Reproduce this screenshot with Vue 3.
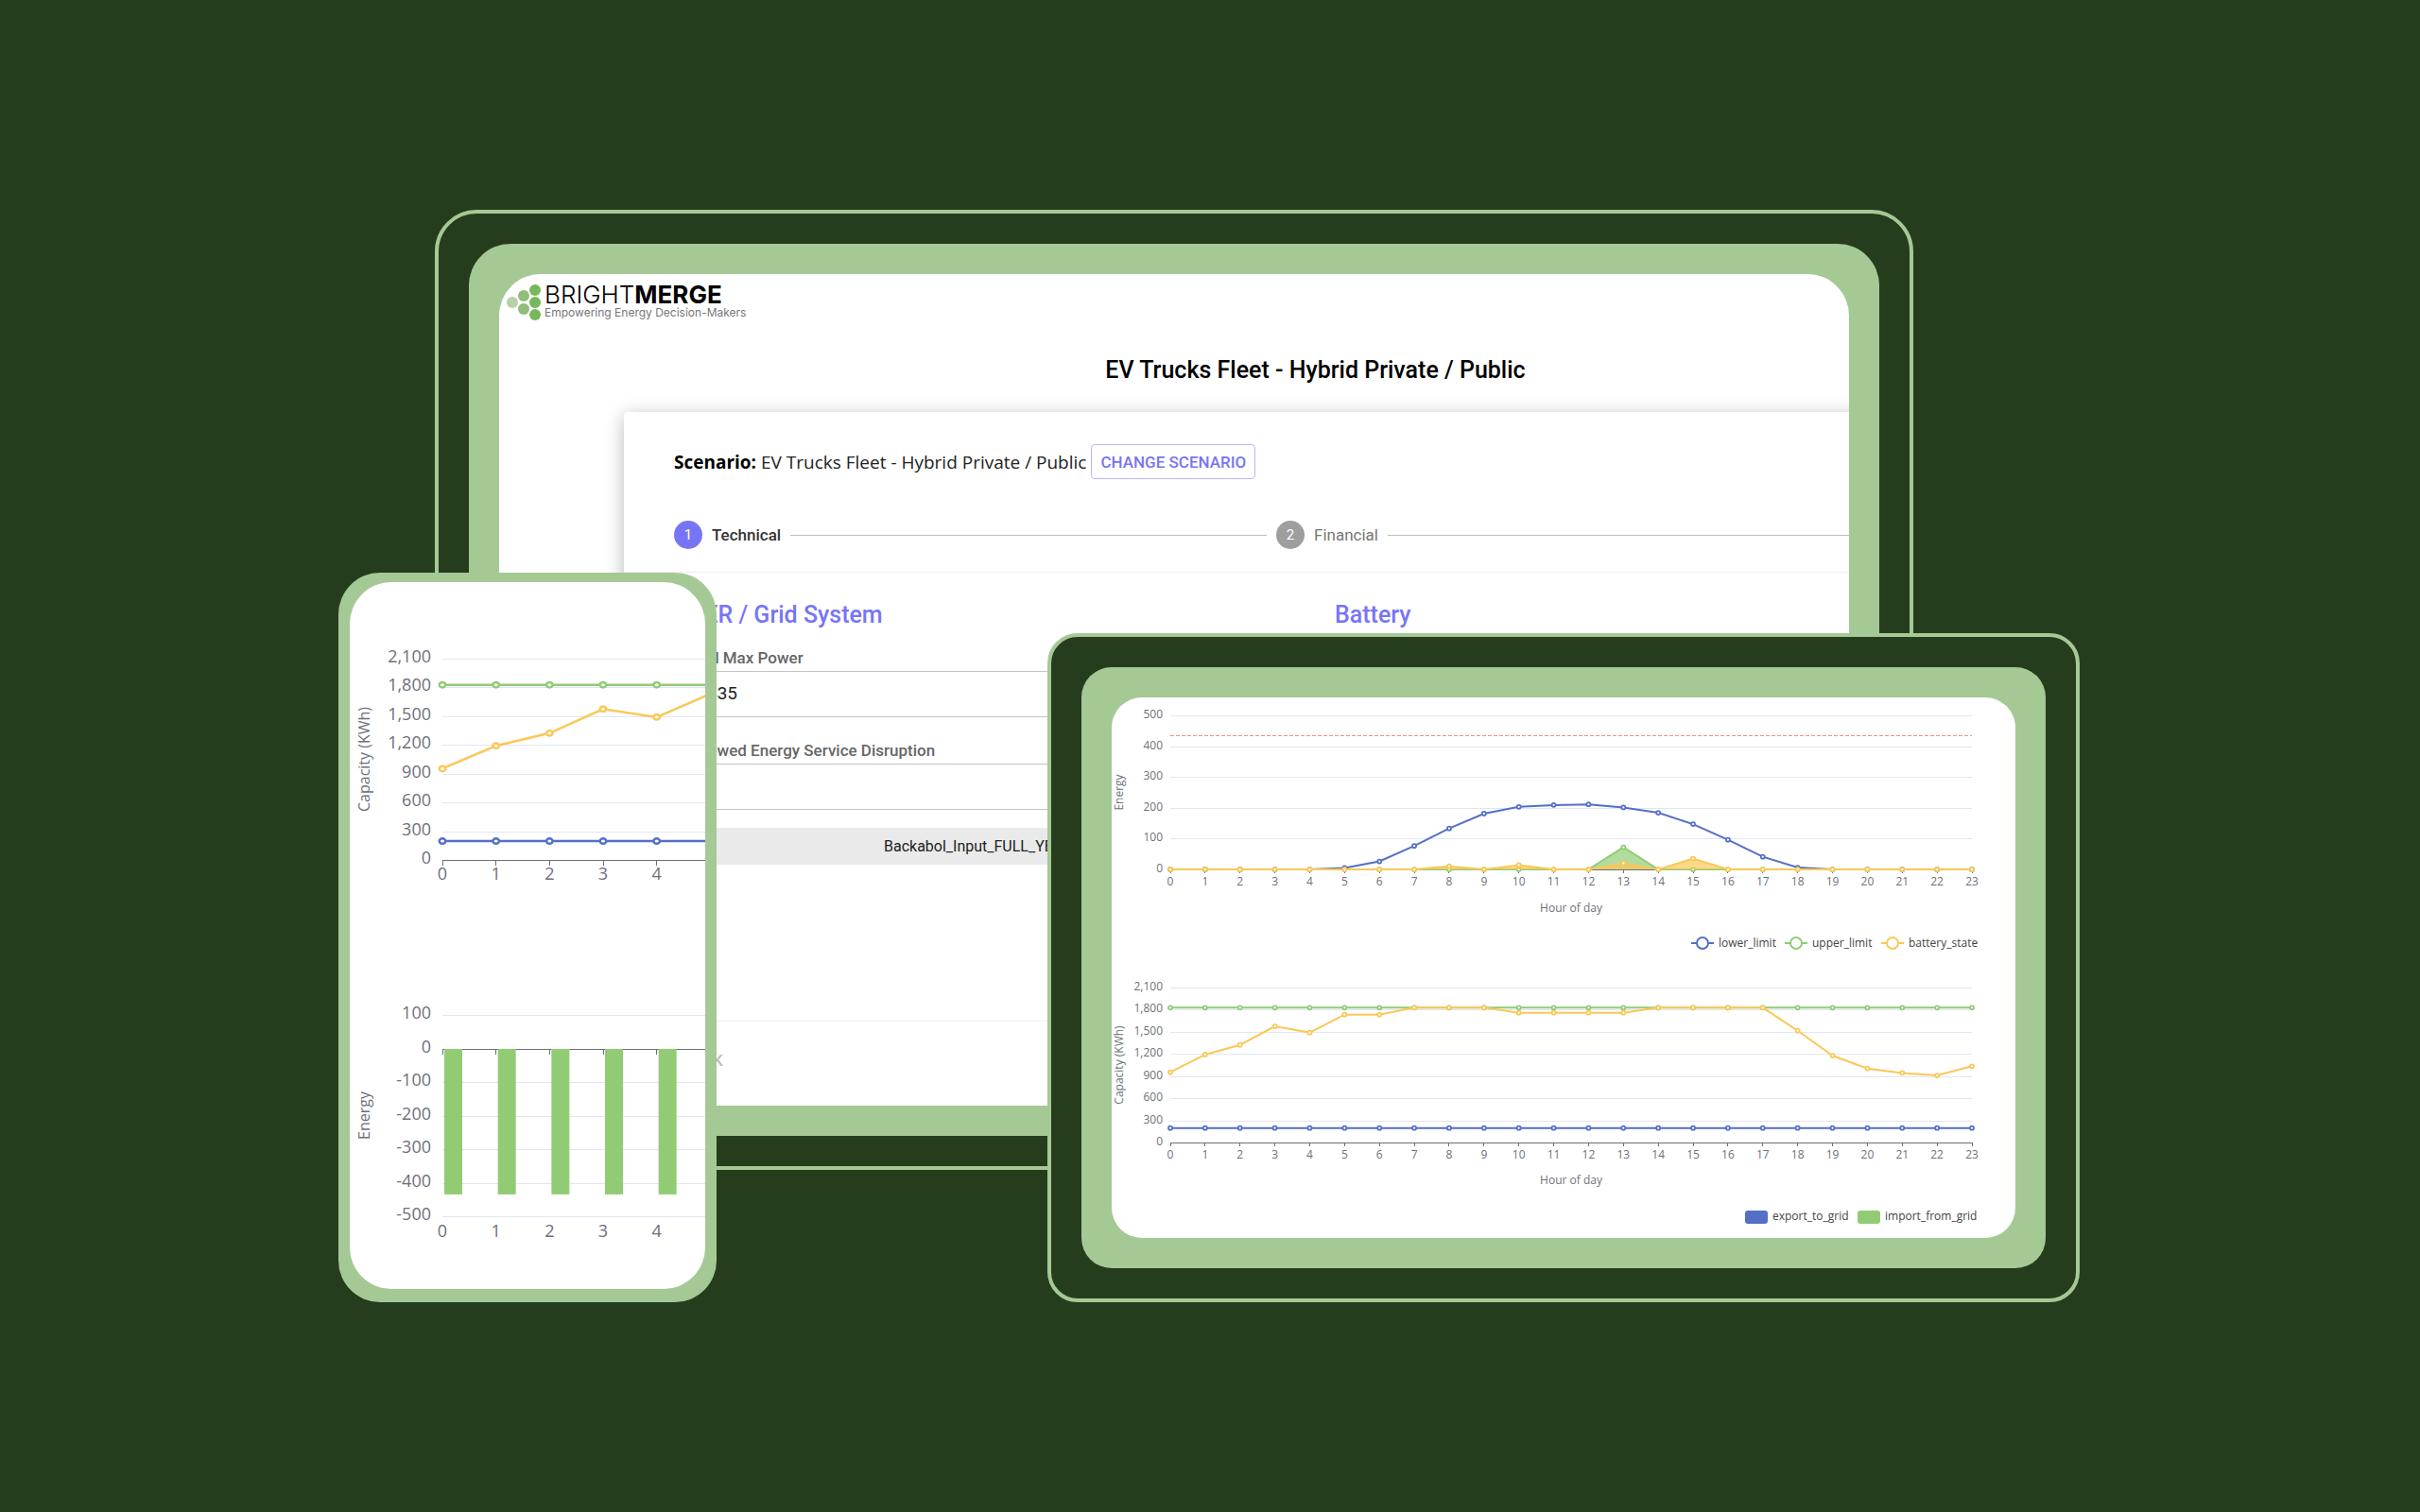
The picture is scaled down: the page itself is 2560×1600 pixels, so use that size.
<script setup>
const fill = (n, v) => Array.from({ length: n }, () => v)
const battery = [
  952, 1191, 1323, 1575, 1490, 1733, 1733, 1827, 1827, 1827, 1758, 1758,
  1758, 1758, 1827, 1827, 1827, 1827, 1515, 1178, 1003, 943, 909, 1033,
]

const BLUE = '#5470c6'
const GREEN = '#91cc75'
const AMBER = '#fac858'

function makeChart(o) {
  const x = (i) => o.left + i * o.step
  const y = (v) => o.bottom - ((v - o.min) / (o.max - o.min)) * (o.bottom - o.top)
  const ticks = []
  for (let v = o.min; v <= o.max; v += o.every) {
    ticks.push({ v, y: Math.round(y(v)), label: v.toLocaleString('en-US') })
  }
  const series = (o.series || []).map((s) => {
    const dots = s.data.map((v, i) => ({ x: x(i), y: y(v) }))
    const points = dots.map((d) => `${d.x.toFixed(1)},${d.y.toFixed(1)}`).join(' ')
    const area = `${x(0)},${y(0)} ${points} ${x(s.data.length - 1)},${y(0)}`
    return { ...s, dots, points, area }
  })
  const hours = Array.from({ length: o.hours }, (_, i) => ({ i, x: x(i) }))
  return { ...o, ticks, series, hours, zero: Math.round(y(0)), y }
}

const wide = { left: 62, right: 910, step: 848 / 23, hours: 24, titleX: 12, labelX: 54 }
const wideCharts = [
  makeChart({
    ...wide, title: 'Energy', top: 19, bottom: 182, min: 0, max: 500, every: 100,
    limit: 40, hourY: 199, axisY: 227,
    series: [
      { color: BLUE, data: [0, 0, 0, 0, 0, 5, 26, 76, 133, 181, 203, 209, 211, 201, 184, 147, 96, 41, 6, 0, 0, 0, 0, 0] },
      { color: GREEN, filled: true, data: [...fill(13, 0), 72, ...fill(10, 0)] },
      { color: AMBER, filled: true, data: [...fill(8, 0), 10, 0, 14, 0, 0, 20, 0, 35, ...fill(8, 0)] },
    ],
  }),
  makeChart({
    ...wide, title: 'Capacity (KWh)', top: 307, bottom: 471, min: 0, max: 2100, every: 300,
    hourY: 488, axisY: 515,
    series: [
      { color: BLUE, data: fill(24, 196) },
      { color: GREEN, data: fill(24, 1827) },
      { color: AMBER, data: battery },
    ],
  }),
]
const lineLegend = [
  { name: 'lower_limit', color: BLUE, x: 625 },
  { name: 'upper_limit', color: GREEN, x: 724 },
  { name: 'battery_state', color: AMBER, x: 826 },
]
const barLegend = [
  { name: 'export_to_grid', color: BLUE, x: 670 },
  { name: 'import_from_grid', color: GREEN, x: 789 },
]

const tall = { left: 98, right: 376, step: 170 / 3, hours: 5, titleX: 21, labelX: 86 }
const tallCharts = [
  makeChart({
    ...tall, title: 'Capacity (KWh)', top: 81, bottom: 294, min: 0, max: 2100, every: 300, hourY: 315,
    series: [
      { color: BLUE, data: fill(6, 196) },
      { color: GREEN, data: fill(6, 1827) },
      { color: AMBER, data: battery.slice(0, 6) },
    ],
  }),
  makeChart({
    ...tall, title: 'Energy', top: 458, bottom: 671, min: -500, max: 100, every: 100, hourY: 693,
    bar: -435,
  }),
]
</script>

<template>
  <main class="stage">
    <section class="device monitor">
      <div class="bezel">
        <div class="screen">
          <div class="page">
            <header class="brand">
              <svg class="mark" width="36" height="40" viewBox="0 0 36 40" aria-hidden="true">
                <circle cx="6" cy="20" r="6" fill="#b4d2a4" />
                <circle cx="18" cy="13" r="6" fill="#90bd7a" />
                <circle cx="18" cy="27" r="6" fill="#90bd7a" />
                <circle cx="30" cy="7" r="6" fill="#76b95a" />
                <circle cx="30" cy="20" r="6" fill="#76b95a" />
                <circle cx="30" cy="33" r="6" fill="#76b95a" />
              </svg>
              <div>
                <div class="name">BRIGHT<b>MERGE</b></div>
                <div class="tagline">Empowering Energy Decision-Makers</div>
              </div>
            </header>
            <h1>EV Trucks Fleet - Hybrid Private / Public</h1>
            <article class="card">
              <div class="scenario">
                <p><b>Scenario:</b> EV Trucks Fleet - Hybrid Private / Public</p>
                <button type="button" class="change">CHANGE SCENARIO</button>
              </div>
              <ol class="steps">
                <li class="step active"><span class="num">1</span><span>Technical</span><i></i></li>
                <li class="step"><span class="num">2</span><span>Financial</span><i></i></li>
              </ol>
              <div class="columns">
                <section class="fields">
                  <h2>DER / Grid System</h2>
                  <label for="max-power">Grid Max Power</label>
                  <input id="max-power" type="text" value="435" />
                  <label for="disruption">Allowed Energy Service Disruption</label>
                  <input id="disruption" type="text" value="" />
                  <div class="file">Backabol_Input_FULL_YEAR</div>
                </section>
                <section>
                  <h2>Battery</h2>
                </section>
              </div>
              <footer class="actions">
                <button type="button" class="back" disabled>BACK</button>
              </footer>
            </article>
          </div>
        </div>
      </div>
    </section>

    <section class="device phone">
      <div class="screen">
        <svg class="charts tall" viewBox="0 0 376 748" preserveAspectRatio="xMinYMin meet">
          <g v-for="c in tallCharts" :key="c.title">
            <text class="title" :transform="`translate(${c.titleX} ${(c.top + c.bottom) / 2}) rotate(-90)`" text-anchor="middle">{{ c.title }}</text>
            <g v-for="t in c.ticks" :key="t.v">
              <line :x1="c.left" :x2="c.right" :y1="t.y" :y2="t.y" class="grid" />
              <text :x="c.labelX" :y="t.y + 4" text-anchor="end">{{ t.label }}</text>
            </g>
            <line :x1="c.left" :x2="c.right" :y1="c.zero" :y2="c.zero" class="axis" />
            <g v-for="h in c.hours" :key="h.i">
              <rect v-if="c.bar" :x="h.x + 2" :y="c.zero" width="19" :height="c.y(c.bar) - c.zero" fill="#91cc75" />
              <line :x1="h.x" :x2="h.x" :y1="c.zero" :y2="c.zero + 6" class="axis" />
              <text :x="h.x" :y="c.hourY" text-anchor="middle">{{ h.i }}</text>
            </g>
            <g v-for="s in c.series" :key="s.color" :stroke="s.color" stroke-width="2.5">
              <polyline :points="s.points" fill="none" />
              <ellipse v-for="d in s.dots" :key="d.x" :cx="d.x" :cy="d.y" rx="3.25" ry="2.75" fill="#fff" />
            </g>
          </g>
        </svg>
      </div>
    </section>

    <section class="device tablet">
      <div class="bezel">
        <div class="screen">
          <svg class="charts wide" viewBox="0 0 956 572" preserveAspectRatio="xMinYMin meet">
            <g v-for="c in wideCharts" :key="c.title">
              <text :transform="`translate(${c.titleX} ${(c.top + c.bottom) / 2}) rotate(-90)`" text-anchor="middle">{{ c.title }}</text>
              <g v-for="t in c.ticks" :key="t.v">
                <line :x1="c.left" :x2="c.right" :y1="t.y" :y2="t.y" class="grid" />
                <text :x="c.labelX" :y="t.y + 3" text-anchor="end">{{ t.label }}</text>
              </g>
              <line :x1="c.left" :x2="c.right" :y1="c.zero" :y2="c.zero" class="axis" />
              <line v-if="c.limit" :x1="c.left" :x2="c.right" :y1="c.limit" :y2="c.limit" class="limit" />
              <g v-for="h in c.hours" :key="h.i">
                <line :x1="h.x" :x2="h.x" :y1="c.zero" :y2="c.zero + 4" class="axis" />
                <text :x="h.x" :y="c.hourY" text-anchor="middle">{{ h.i }}</text>
              </g>
              <g v-for="s in c.series" :key="s.color" :stroke="s.color">
                <polygon v-if="s.filled" :points="s.area" :fill="s.color" fill-opacity="0.7" stroke="none" />
                <polyline :points="s.points" fill="none" stroke-width="2" />
                <circle v-for="d in s.dots" :key="d.x" :cx="d.x" :cy="d.y" r="2" fill="#fff" stroke-width="1.75" />
              </g>
              <text x="486" :y="c.axisY" text-anchor="middle">Hour of day</text>
            </g>
            <g v-for="l in lineLegend" :key="l.name" :stroke="l.color" stroke-width="2">
              <line :x1="l.x - 12" :x2="l.x + 12" y1="260" y2="260" />
              <circle :cx="l.x" cy="260" r="6" fill="#fff" />
              <text class="key" :x="l.x + 17" y="264">{{ l.name }}</text>
            </g>
            <g v-for="l in barLegend" :key="l.name">
              <rect :x="l.x" y="543" width="24" height="14" rx="3" :fill="l.color" />
              <text class="key" :x="l.x + 29" y="553">{{ l.name }}</text>
            </g>
          </svg>
        </div>
      </div>
    </section>
  </main>
</template>

<style>
body {
  margin: 0;
  background: #263d1d;
}
</style>

<style scoped>
* {
  box-sizing: border-box;
}
.stage {
  position: relative;
  height: calc(100vh - 444px);
  min-height: 1156px;
  margin: 222px 360px 222px 358px;
  font-family: Roboto, 'Liberation Sans', sans-serif;
  color: #000;
}
.device {
  position: absolute;
  border-radius: 44px;
}
.monitor {
  inset: 0 176px 140px 102px;
  padding: 32px;
  border: 4px solid #a5c995;
}
.phone {
  top: 384px;
  bottom: 0;
  left: 0;
  width: 400px;
  padding: 10px 12px 14px;
  background: #a5c995;
}
.tablet {
  inset: 448px 0 0 750px;
  padding: 32px;
  border: 4px solid #a5c995;
  border-radius: 32px;
  background: #263d1d;
}
.bezel {
  height: 100%;
  padding: 32px;
  border-radius: 44px;
  background: #a5c995;
}
.screen {
  height: 100%;
  overflow: hidden;
  border-radius: 44px;
  background: #fff;
}
.tablet .bezel,
.tablet .screen {
  border-radius: 32px;
}

.page {
  display: flex;
  flex-direction: column;
  width: calc(100% + 299px);
  height: 100%;
}
.brand {
  display: flex;
  gap: 4px;
  padding: 10px 8px 0;
  height: 88px;
}
.name {
  font: 300 26px/24px Inter, sans-serif;
}
.name b {
  font-weight: 700;
}
.tagline {
  font: 400 12px/14px Inter, sans-serif;
  color: #777;
}
h1 {
  margin: 0;
  font-size: 25px;
  line-height: 28px;
  font-weight: 500;
  text-align: center;
}
.card {
  flex: 1;
  margin: 30px 132px 0;
  border-radius: 4px;
  box-shadow: 0 4px 20px rgba(0, 0, 0, 0.28);
}
.scenario {
  display: flex;
  align-items: center;
  gap: 5px;
  padding: 34px 53px 0;
}
.scenario p {
  margin: 0;
  font: 400 19px/28px 'Open Sans', sans-serif;
  color: #222;
}
.scenario b {
  color: #000;
}
.change {
  height: 37px;
  padding: 0 9px;
  border: 1px solid #b9b7fb;
  border-radius: 4px;
  background: none;
  font: 500 17px/24px Roboto, sans-serif;
  color: #7775f5;
}
.steps {
  display: grid;
  grid-template-columns: 637px 1fr;
  margin: 0;
  padding: 44px 0 24px 53px;
  border-bottom: 1px solid #efefef;
  list-style: none;
}
.step {
  display: flex;
  align-items: center;
  gap: 10px;
  height: 30px;
  font-size: 17px;
  color: #777;
}
.step i {
  flex: 1;
  height: 1px;
  margin-right: 10px;
  background: #bdbdbd;
}
.num {
  width: 30px;
  border-radius: 50%;
  background: #9e9e9e;
  font-size: 15px;
  line-height: 30px;
  text-align: center;
  color: #fff;
}
.active {
  font-weight: 500;
  color: #333;
}
.active .num {
  background: #7775f5;
  font-weight: 400;
}
.columns {
  display: grid;
  grid-template-columns: 683px 1fr;
  height: 475px;
  padding: 29px 0 0 69px;
  border-bottom: 1px solid #efefef;
}
h2 {
  margin: 0;
  font-size: 25px;
  line-height: 32px;
  font-weight: 500;
  color: #7775f5;
}
.fields {
  display: flex;
  flex-direction: column;
  padding-right: 40px;
}
.fields h2 {
  margin-bottom: 17px;
}
.fields label {
  padding-bottom: 2px;
  font-size: 17px;
  line-height: 24px;
  font-weight: 500;
  color: #666;
}
.fields input {
  height: 49px;
  margin-bottom: 23px;
  padding: 0 19px 2px;
  border: solid #c4c4c4;
  border-width: 1px 0;
  background: none;
  font: 400 19px/24px Roboto, sans-serif;
  color: #222;
}
.file {
  height: 39px;
  margin-top: -4px;
  padding-left: 206px;
  background: #eaeaea;
  font-size: 16px;
  line-height: 39px;
  color: #222;
}
.actions {
  padding: 28px 49px;
}
.back {
  padding: 0 12px;
  border: 0;
  background: none;
  font: 500 17px/26px Roboto, sans-serif;
  color: #bbb;
}

.charts {
  display: block;
  width: 100%;
}
.charts text {
  font-family: 'Open Sans', sans-serif;
  fill: #6e7079;
}
.tall text {
  font-size: 18px;
}
.tall .title {
  font-size: 16px;
}
.wide text {
  font-size: 12px;
}
.wide .key {
  fill: #444;
  stroke: none;
}
.grid {
  stroke: #e0e6f1;
  shape-rendering: crispEdges;
}
.axis {
  stroke: #6e7079;
  shape-rendering: crispEdges;
}
.limit {
  stroke: #f08f85;
  stroke-dasharray: 4 2;
  shape-rendering: crispEdges;
}
</style>
